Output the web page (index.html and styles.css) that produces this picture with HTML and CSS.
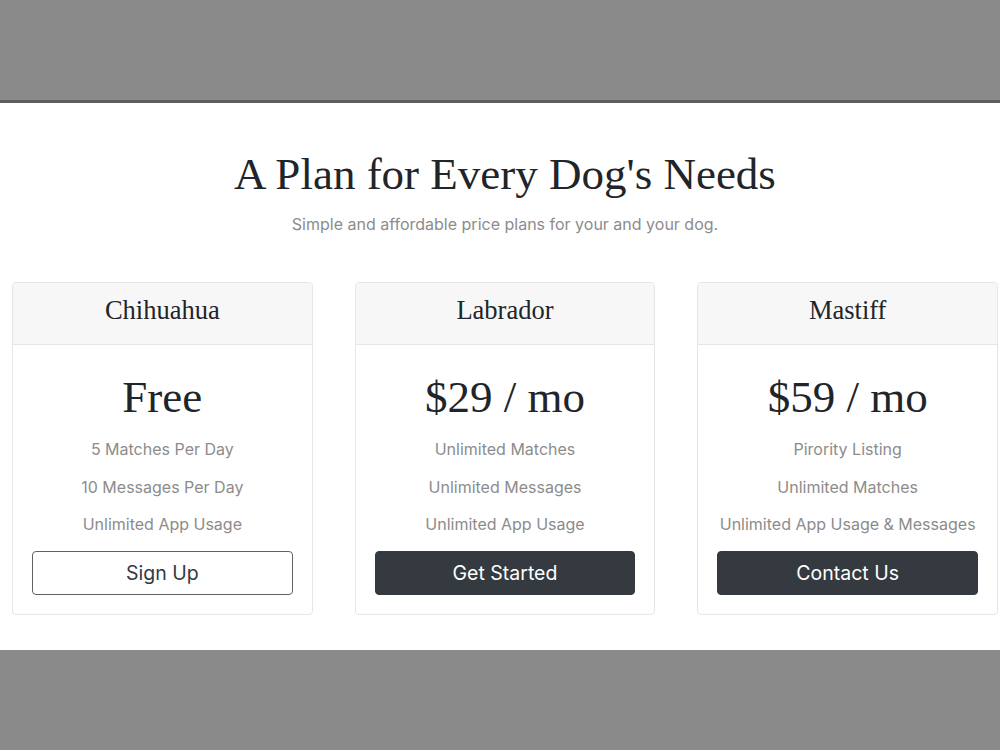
FILE: index.html
```html
<!DOCTYPE html>
<html>
<head>
    <meta http-equiv="content-type" content="text/html; charset=UTF-8">
    <meta name="viewport" content="width=device-width, initial-scale=1.0">
    <title>Pricing</title>
    <link rel="stylesheet" href="styles.css">
</head>

<body>
    <div class="band"></div>

    <section id="pricing">
        <h1>A Plan for Every Dog's Needs</h1>
        <p class="lead">Simple and affordable price plans for your and your dog.</p>

        <div class="plans">
            <div class="plan">
                <div class="plan-head"><h3>Chihuahua</h3></div>
                <div class="plan-body">
                    <h2>Free</h2>
                    <p>5 Matches Per Day</p>
                    <p>10 Messages Per Day</p>
                    <p>Unlimited App Usage</p>
                    <button class="btn btn-outline">Sign Up</button>
                </div>
            </div>

            <div class="plan">
                <div class="plan-head"><h3>Labrador</h3></div>
                <div class="plan-body">
                    <h2>$29 / mo</h2>
                    <p>Unlimited Matches</p>
                    <p>Unlimited Messages</p>
                    <p>Unlimited App Usage</p>
                    <button class="btn btn-dark">Get Started</button>
                </div>
            </div>

            <div class="plan">
                <div class="plan-head"><h3>Mastiff</h3></div>
                <div class="plan-body">
                    <h2>$59 / mo</h2>
                    <p>Pirority Listing</p>
                    <p>Unlimited Matches</p>
                    <p>Unlimited App Usage &amp; Messages</p>
                    <button class="btn btn-dark">Contact Us</button>
                </div>
            </div>
        </div>
    </section>

    <div class="band band-bottom"></div>
</body>

</html>
```

FILE: styles.css
```css
body {
    margin: 0;
    font-family: Inter, "Open Sans", sans-serif;
    background: #8a8a8a;
}

.band {
    height: 100px;
    background: #8a8a8a;
    border-bottom: 3px solid #5e5e5e;
}

.band-bottom {
    height: 100px;
    border: none;
}

#pricing {
    background: #fff;
    padding: 44px 2px 35px 12px;
    text-align: center;
}

#pricing h1 {
    margin: 0;
    font-family: "Liberation Serif", serif;
    font-weight: normal;
    font-size: 45px;
    line-height: 1.2;
    color: #212529;
}

.lead {
    margin: 13px 0 48px;
    font-size: 16px;
    color: #8c8c8c;
}

.plans {
    display: grid;
    grid-template-columns: repeat(3, 1fr);
    gap: 42px;
}

.plan {
    border: 1px solid #e6e6e6;
    border-radius: 4px;
    overflow: hidden;
}

.plan-head {
    background: #f7f7f7;
    border-bottom: 1px solid #e6e6e6;
    height: 62px;
    box-sizing: border-box;
    padding-bottom: 6px;
    display: flex;
    align-items: center;
    justify-content: center;
}

.plan-head h3 {
    margin: 0;
    font-family: "Liberation Serif", serif;
    font-weight: normal;
    font-size: 26.5px;
    color: #212529;
}

.plan-body {
    padding: 25px 19px 19px;
}

.plan-body h2 {
    margin: 0 0 7px;
    font-family: "Liberation Serif", serif;
    font-weight: normal;
    font-size: 45px;
    line-height: 1.2;
    color: #212529;
}

.plan-body p {
    margin: 0;
    font-size: 16px;
    line-height: 37.5px;
    color: #8c8c8c;
}

.btn {
    display: block;
    width: 100%;
    height: 44px;
    margin-top: 7px;
    border-radius: 4px;
    font-family: inherit;
    font-size: 19.5px;
    cursor: pointer;
}

.btn-outline {
    background: #fff;
    border: 1px solid #5f6368;
    color: #343a40;
}

.btn-dark {
    background: #343a40;
    border: 1px solid #343a40;
    color: #fff;
}
```
